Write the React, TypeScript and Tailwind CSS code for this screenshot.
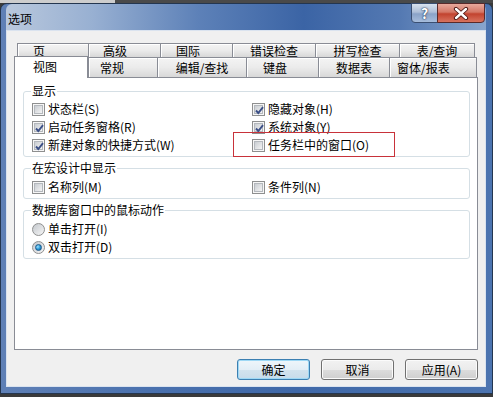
import React from "react";

type Tab = { label: string; cls: string };

const row1: Tab[] = [
  { label: "页", cls: "w-[71px] pl-[15px]" },
  { label: "高级", cls: "w-[72px] pl-[14px]" },
  { label: "国际", cls: "w-[72px] pl-[15px]" },
  { label: "错误检查", cls: "w-[83px] justify-center" },
  { label: "拼写检查", cls: "w-[84px] justify-center" },
  { label: "表/查询", cls: "w-[76px] justify-center border-r" },
];

const row2: Tab[] = [
  { label: "常规", cls: "w-[69px] pl-[11px]" },
  { label: "编辑/查找", cls: "w-[89px] justify-center" },
  { label: "键盘", cls: "w-[72px] pl-[16px]" },
  { label: "数据表", cls: "w-[71px] justify-center" },
  { label: "窗体/报表", cls: "w-[88px] pl-[7px] border-r" },
];

const TabBtn = ({ label, cls }: Tab) => (
  <div
    className={`flex h-full items-center border-l border-t border-[#898c95] bg-linear-to-b from-[#f4f4f4] via-[#ebebeb] to-[#d8d8d8] shadow-[inset_1px_1px_0_#ffffff] ${cls}`}
  >
    {label}
  </div>
);

const Check = ({ checked }: { checked?: boolean }) => (
  <span className="relative flex h-[13px] w-[13px] shrink-0 border border-[#8e8f8f] bg-[#f6f6f6] p-[1px]">
    <span className="h-full w-full border border-[#b4b8bd] bg-linear-to-br from-[#c9cdd2] to-[#f4f4f4]" />
    {checked && (
      <svg className="absolute left-[1px] top-[1px]" width="11" height="11" viewBox="0 0 11 11">
        <path d="M2 5.5 L4.3 8 L9 2.2" fill="none" stroke="#3b4f86" strokeWidth="1.9" />
      </svg>
    )}
  </span>
);

const Radio = ({ checked }: { checked?: boolean }) => (
  <span className="flex h-[13px] w-[13px] shrink-0 items-center justify-center rounded-full border border-[#8e8f8f] bg-linear-to-br from-[#c4c8cd] to-[#f6f6f6]">
    {checked && (
      <span className="h-[7px] w-[7px] rounded-full border border-[#1c5a8c] bg-[radial-gradient(circle_at_35%_35%,#9ee2ff_0%,#2a9ad8_50%,#125a92_100%)]" />
    )}
  </span>
);

const Row = ({ label, checked, radio }: { label: string; checked?: boolean; radio?: boolean }) => (
  <div className="flex h-[18px] items-center gap-[3px] whitespace-nowrap">
    {radio ? <Radio checked={checked} /> : <Check checked={checked} />}
    <span>{label}</span>
  </div>
);

const Group = ({ title, children, cls }: { title: string; children: React.ReactNode; cls: string }) => (
  <fieldset className={`rounded-[3px] border border-[#d5dfe5] pl-[7px] pb-[2px] ${cls}`}>
    <legend className="px-[1px] leading-[14px]">{title}</legend>
    <div className="pl-[1px]">{children}</div>
  </fieldset>
);

const Btn = ({ label, primary }: { label: string; primary?: boolean }) => (
  <div
    className={
      primary
        ? "flex h-[21px] w-[73px] items-center justify-center rounded-[3px] border border-[#3c7fb1] bg-[linear-gradient(to_bottom,#eef6fb_0%,#e3eef6_50%,#d3e3ee_50%,#c6dbea_100%)] shadow-[inset_0_0_0_1px_#9ed8f5]"
        : "flex h-[21px] w-[73px] items-center justify-center rounded-[3px] border border-[#707070] bg-[linear-gradient(to_bottom,#f2f2f2_0%,#ebebeb_50%,#dddddd_50%,#cfcfcf_100%)] shadow-[inset_0_0_0_1px_#fbfbfb]"
    }
  >
    {label}
  </div>
);

export default function App() {
  return (
    <div className="relative h-[397px] w-[493px] overflow-hidden bg-[#3a3a3a] font-['Noto_Sans_CJK_SC',sans-serif] text-[12px] leading-[14px] text-black">
      <div className="flex h-[3px]">
        <div className="w-[115px] bg-[#cdcdcd]" />
        <div className="flex-1 bg-[#4a4a4a]" />
      </div>

      {/* window */}
      <div className="flex h-[391px] flex-col rounded-t-[7px] border border-[#24364f] bg-[linear-gradient(to_right,#5f80b6_0%,#4a71ae_30%,#3f68a8_60%,#4c74b0_100%)] pb-[6px] pl-[5px] pr-[6px]">
        {/* title bar */}
        <div className="flex h-[26px] shrink-0 items-start justify-between rounded-t-[6px] bg-[linear-gradient(to_right,#b9c8dd_0%,#98b0d2_18%,#5d81b8_40%,#3b64a5_62%,#5479b2_82%,#89a5cd_100%)]">
          <span className="ml-[2px] mt-[8px] text-black">选项</span>
          <div className="-mt-px mr-[1px] flex h-[20px]">
            <div className="flex w-[27px] items-center justify-center rounded-bl-[4px] border border-[#3a4f72] bg-[linear-gradient(to_bottom,#d8e2ef_0%,#aebfd8_45%,#8aa3c8_55%,#a7bddc_100%)] text-[14px] font-bold text-white [text-shadow:0_0_2px_#1b2d4d,0_0_1px_#1b2d4d]">
              ?
            </div>
            <div className="-ml-px flex w-[48px] items-center justify-center rounded-br-[4px] border border-[#5a2a2a] bg-[linear-gradient(to_bottom,#e9a99c_0%,#d47766_45%,#c2432f_55%,#d8735f_100%)]">
              <svg width="16" height="13" viewBox="0 0 16 13">
                <path d="M3 2 L13 11 M13 2 L3 11" stroke="#4a1410" strokeWidth="4.2" strokeLinecap="round" />
                <path d="M3 2 L13 11 M13 2 L3 11" stroke="#ffffff" strokeWidth="2.4" strokeLinecap="round" />
              </svg>
            </div>
          </div>
        </div>

        {/* client area */}
        <div className="flex flex-1 flex-col border border-[#dae3ef] bg-[#f0f0f0] pt-[10px]">
          <div className="mx-[7px] flex flex-col">
            <div className="flex h-[16px] pl-[3px] pt-[2px]">
              {row1.map((t) => (
                <TabBtn key={t.label} {...t} />
              ))}
            </div>
            <div className="flex h-[20px] items-end">
              <div className="relative top-[1px] z-10 flex h-[22px] w-[74px] items-center border-x border-t border-[#898c95] bg-white pb-[2px] pl-[18px]">
                视图
              </div>
              <div className="flex h-[20px]">
                {row2.map((t) => (
                  <TabBtn key={t.label} {...t} />
                ))}
              </div>
            </div>

            {/* tab page */}
            <div className="flex h-[273px] flex-col gap-[4px] border border-[#898c95] bg-white pl-[8px] pr-[7px] pt-[6px]">
              <Group title="显示" cls="">
                <div className="grid grid-cols-[220px_1fr] pt-[2px]">
                  <Row label="状态栏(S)" />
                  <Row label="隐藏对象(H)" checked />
                  <Row label="启动任务窗格(R)" checked />
                  <Row label="系统对象(Y)" checked />
                  <Row label="新建对象的快捷方式(W)" checked />
                  <Row label="任务栏中的窗口(O)" />
                </div>
              </Group>
              <Group title="在宏设计中显示" cls="">
                <div className="grid grid-cols-[220px_1fr] pt-[3px]">
                  <Row label="名称列(M)" />
                  <Row label="条件列(N)" />
                </div>
              </Group>
              <Group title="数据库窗口中的鼠标动作" cls="">
                <div className="flex flex-col pt-[3px]">
                  <Row label="单击打开(I)" radio />
                  <Row label="双击打开(D)" radio checked />
                </div>
              </Group>
            </div>
          </div>

          <div className="mr-[7px] mt-[9px] flex justify-end gap-[11px]">
            <Btn label="确定" primary />
            <Btn label="取消" />
            <Btn label="应用(A)" />
          </div>
        </div>
      </div>

      {/* red annotation box */}
      <div className="absolute left-[233px] top-[132px] h-[25px] w-[162px] border border-[#c8323a]" />
    </div>
  );
}
